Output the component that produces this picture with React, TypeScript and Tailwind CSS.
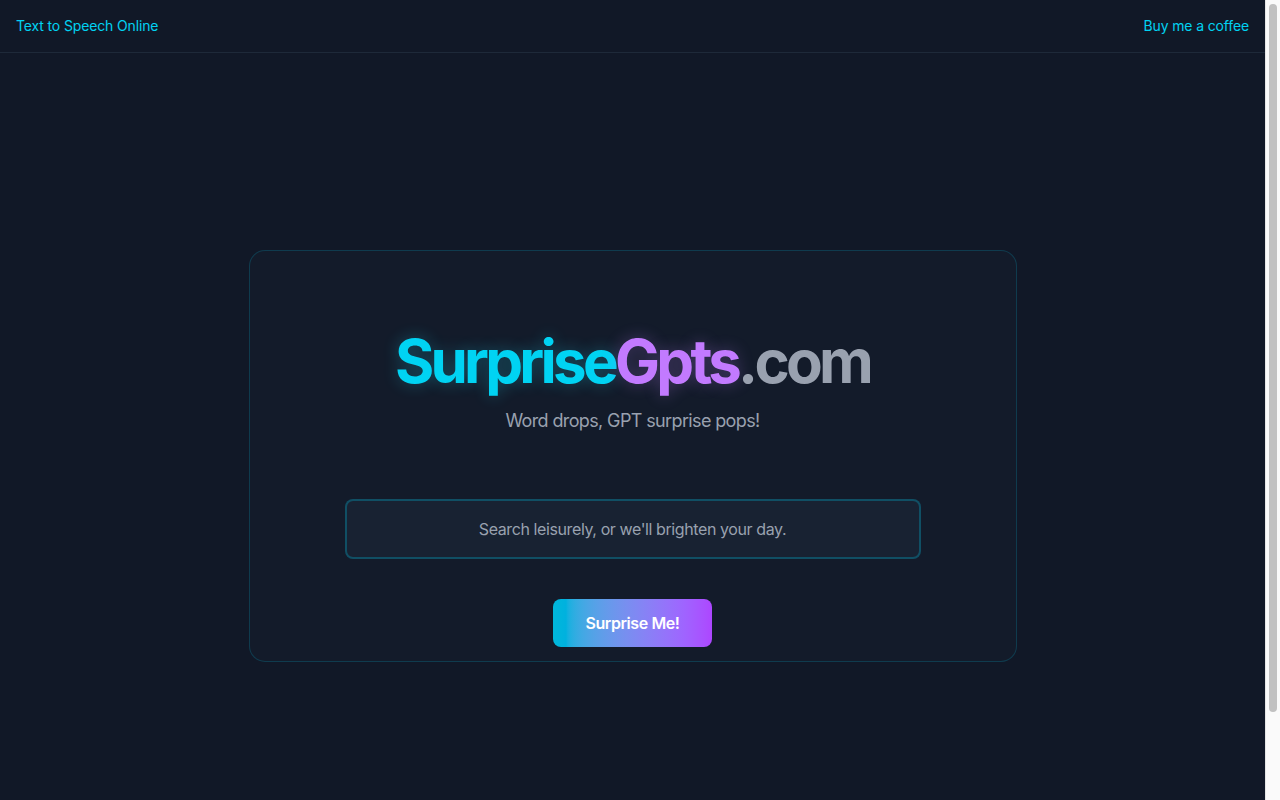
export default function App() {
  return (
    <div className="flex h-screen overflow-hidden bg-[#111827] font-['Inter',sans-serif] text-gray-100">
      <div className="flex-1 overflow-hidden">
        {/* Header */}
        <header className="flex h-[53px] items-center justify-between border-b border-gray-800 px-4">
          <a href="#" className="text-sm tracking-[-0.01em] text-cyan-400">
            Text to Speech Online
          </a>
          <a href="#" className="text-sm tracking-[-0.01em] text-cyan-400">
            Buy me a coffee
          </a>
        </header>

        {/* Main */}
        <main className="px-4 pt-[197px] pb-[244px]">
          <div className="mx-auto max-w-3xl rounded-2xl border border-cyan-500/20 bg-[#131b2a] px-12 pt-20 pb-[14px] text-center">
            <h1 className="text-6xl font-bold leading-none tracking-[-0.062em]">
              <span className="text-cyan-400 [text-shadow:0_0_16px_rgba(34,211,238,0.3)]">Surprise</span>
              <span className="text-purple-400 [text-shadow:0_0_16px_rgba(192,132,252,0.3)]">Gpts</span>
              <span className="text-gray-400">.com</span>
            </h1>
            <p className="mt-4 text-lg tracking-[-0.035em] text-gray-400">Word drops, GPT surprise pops!</p>

            <input
              type="text"
              placeholder="Search leisurely, or we'll brighten your day."
              className="mx-auto mt-16 block w-full max-w-xl rounded-lg border-2 border-cyan-500/30 bg-gray-800/50 px-6 py-4 text-center text-base tracking-[-0.025em] text-gray-200 placeholder:text-gray-400 outline-none"
            />

            <button
              type="button"
              className="mt-10 rounded-lg bg-gradient-to-r from-cyan-500 to-purple-500 px-8 py-3 text-base font-semibold tracking-[-0.025em] text-white"
            >
              Surprise Me!
            </button>
          </div>
        </main>
      </div>

      {/* Scrollbar */}
      <div className="flex w-[15px] shrink-0 justify-center border-l border-[#e5e5e5] bg-[#fafafa] pt-[4px]">
        <div className="h-[708px] w-[8px] rounded-full bg-[#c1c1c1]"></div>
      </div>
    </div>
  );
}
